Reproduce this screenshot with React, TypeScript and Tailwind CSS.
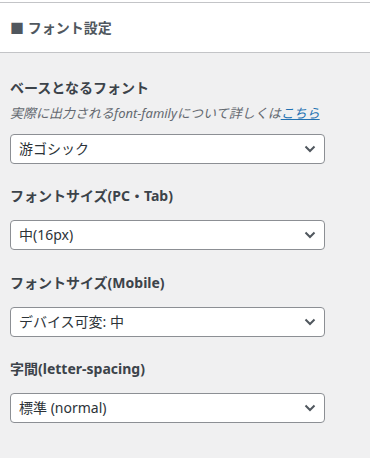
import React from "react";

const font = { fontFamily: '"Noto Sans", "Noto Sans CJK JP", sans-serif' };

interface FieldProps {
  label: string;
  value: string;
  options: string[];
  description?: React.ReactNode;
  className?: string;
}

function Chevron() {
  return (
    <svg width="12" height="8" viewBox="0 0 12 8" className="pointer-events-none absolute right-[9px] top-[11px]">
      <path d="M1.5 1.5 L6 6 L10.5 1.5" fill="none" stroke="#50575e" strokeWidth="2" />
    </svg>
  );
}

function SelectField({ label, value, options, description, className }: FieldProps) {
  return (
    <div className={className}>
      <div className="text-[14px] font-bold leading-[20px] text-[#3c434a]">{label}</div>
      {description}
      <div className="relative mt-[14px] w-[315px]">
        <select
          defaultValue={value}
          className="block h-[30px] w-full appearance-none rounded-[4px] border border-[#8c8f94] bg-white pl-[8px] pr-[24px] text-[14px] leading-[28px] text-[#2c3338] outline-none"
          style={font}
        >
          {options.map((o) => (
            <option key={o} value={o}>
              {o}
            </option>
          ))}
        </select>
        <Chevron />
      </div>
    </div>
  );
}

export default function App() {
  return (
    <div className="h-[458px] w-[370px] overflow-hidden bg-[#f0f0f1]" style={font}>
      <div className="h-[2px] bg-white" />
      <div className="flex h-[51px] items-center border-y border-[#c3c4c7] bg-white pl-[10px]">
        <span className="text-[14px] font-bold text-[#50575e]">■ フォント設定</span>
      </div>

      <div className="px-[10px] pt-[25px]">
        <SelectField
          label="ベースとなるフォント"
          value="游ゴシック"
          options={["游ゴシック", "ヒラギノ角ゴシック", "Noto Sans JP", "メイリオ"]}
          description={
            <p className="mt-[6px] -mb-[2px] text-[13px] italic leading-[18px] text-[#646970]">
              実際に出力されるfont-familyについて詳しくは
              <a href="#" className="text-[#2271b1] underline">
                こちら
              </a>
            </p>
          }
        />
        <SelectField
          className="mt-[22px]"
          label="フォントサイズ(PC・Tab)"
          value="中(16px)"
          options={["小(15px)", "中(16px)", "大(17px)"]}
        />
        <SelectField
          className="mt-[23px]"
          label="フォントサイズ(Mobile)"
          value="デバイス可変: 中"
          options={["デバイス可変: 小", "デバイス可変: 中", "デバイス可変: 大"]}
        />
        <SelectField
          className="mt-[22px]"
          label="字間(letter-spacing)"
          value="標準 (normal)"
          options={["狭め", "標準 (normal)", "広め"]}
        />
      </div>
    </div>
  );
}
